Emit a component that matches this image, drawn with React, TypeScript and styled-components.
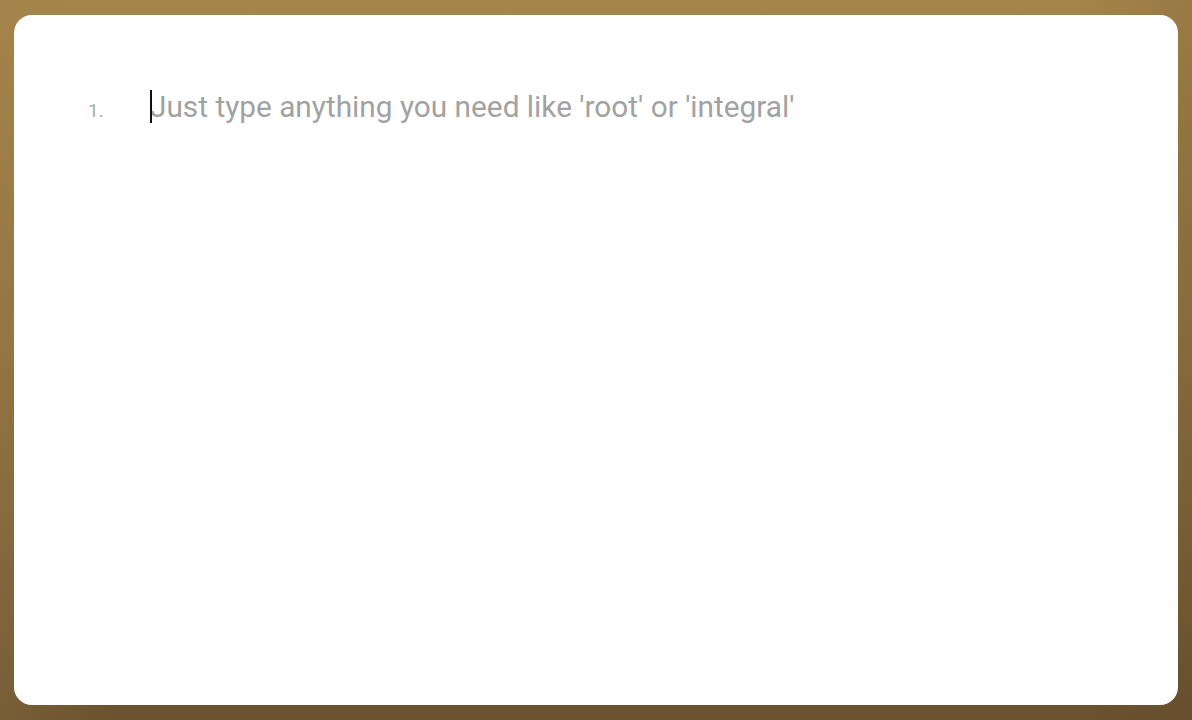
import React from "react";
import styled, { createGlobalStyle } from "styled-components";

const Global = createGlobalStyle`
  html, body { margin: 0; padding: 0; width: 100%; height: 100%; }
  body {
    background: #8f7040;
    font-family: Roboto, "Liberation Sans", sans-serif;
    overflow: hidden;
  }
  #root { height: 100%; }
`;

const Frame = styled.div`
  box-sizing: border-box;
  width: 1192px;
  height: 720px;
  padding: 15px 14px 15px 14px;
  display: flex;
  background:
    linear-gradient(90deg, rgba(160, 130, 75, 0.25) 0%, rgba(0,0,0,0) 10%, rgba(0,0,0,0) 90%, rgba(80, 60, 30, 0.15) 100%),
    linear-gradient(180deg, #a6854b 0%, #8f7040 50%, #6a5230 100%);
`;

const Card = styled.div`
  flex: 1;
  background: #ffffff;
  border-radius: 18px;
  padding: 74px 0 0 74px;
  box-sizing: border-box;
`;

const Row = styled.div`
  display: flex;
  align-items: baseline;
`;

const Num = styled.span`
  width: 62px;
  font-size: 19px;
  color: #ababab;
`;

const Caret = styled.span`
  display: inline-block;
  width: 2px;
  height: 33px;
  background: #111;
  align-self: center;
  margin-right: -2px;
  position: relative;
  z-index: 1;
`;

const Placeholder = styled.span`
  font-size: 29.8px;
  font-weight: 400;
  color: #a2a2a2;
  letter-spacing: 0;
`;

export default function App() {
  return (
    <>
      <Global />
      <Frame>
        <Card>
          <Row>
            <Num>1.</Num>
            <Caret />
            <Placeholder>Just type anything you need like 'root' or 'integral'</Placeholder>
          </Row>
        </Card>
      </Frame>
    </>
  );
}
